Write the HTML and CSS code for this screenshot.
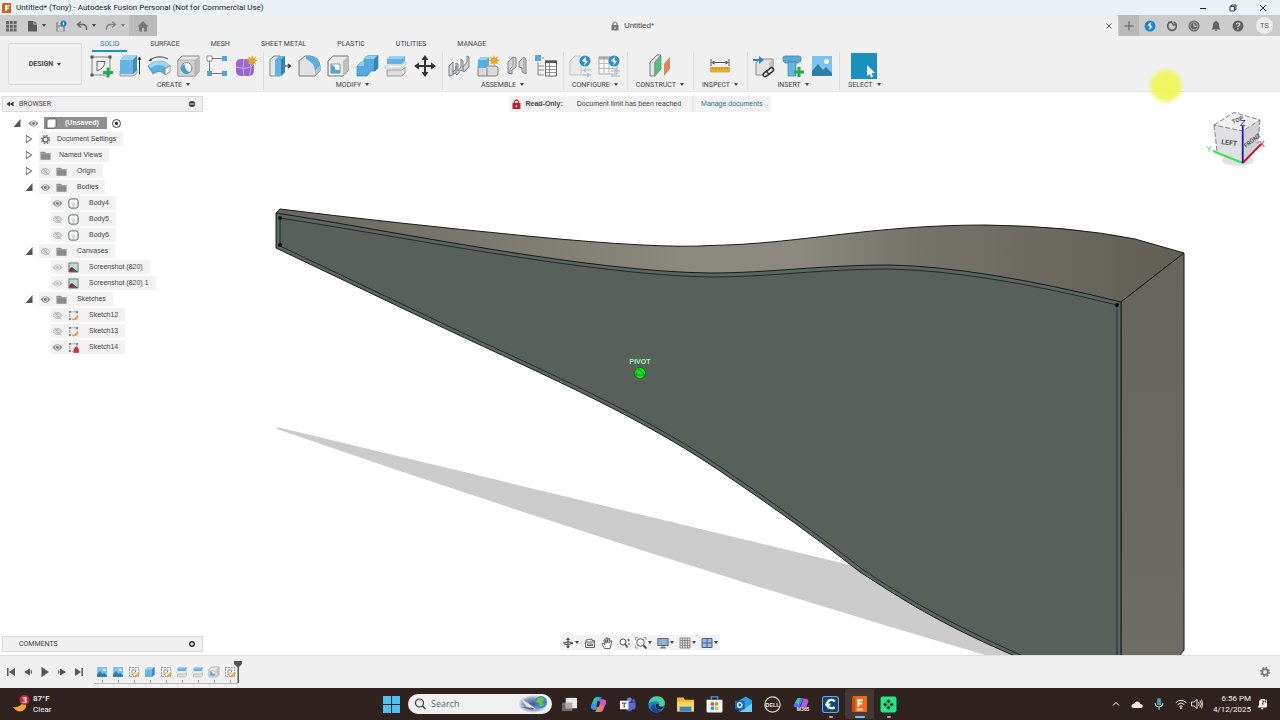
FILE: index.html
```html
<!DOCTYPE html>
<html lang="en">
<head>
<meta charset="utf-8">
<title>Untitled* (Tony) - Autodesk Fusion Personal (Not for Commercial Use)</title>
<link rel="stylesheet" href="styles.css">
</head>
<body>
<svg class="defs" aria-hidden="true">
  <symbol id="eye" viewBox="0 0 12 10"><path d="M.5 5Q6 -2 11.500 5Q6 12 .5 5Z" fill="#8f8f8f"/><circle cx="6" cy="5" r="2.600" fill="#eee"/><circle cx="6" cy="5" r="1.600" fill="#777"/></symbol>
  <symbol id="eye-off" viewBox="0 0 12 10"><path d="M1 5Q6 -1.500 11 5Q6 11.500 1 5Z" fill="none" stroke="#a2a2a2"/><circle cx="6" cy="5" r="1.800" fill="none" stroke="#a2a2a2" stroke-width=".8"/><path d="M2.500 1L9.500 9" stroke="#a2a2a2" stroke-width=".9"/></symbol>
  <symbol id="folder" viewBox="0 0 12 10"><path d="M.5 1H5.500L6.500 2.500H11.500V9.500H.5Z" fill="#8b8b8b"/><path d="M.5 3H11.500" stroke="#b5b5b5" stroke-width=".6"/></symbol>
  <symbol id="gear" viewBox="0 0 12 12"><circle cx="6" cy="6" r="4.300" fill="none" stroke="#777" stroke-width="1.600" stroke-dasharray="1.800 1.577"/><circle cx="6" cy="6" r="2.800" fill="none" stroke="#777" stroke-width="1.700"/></symbol>
  <symbol id="body" viewBox="0 0 12 12"><rect x="1" y="1" width="10" height="10" rx="2.500" fill="#fff" stroke="#4a525c"/><path d="M4 5H8V9.500H4Z" fill="#d3d6da"/></symbol>
  <symbol id="shot" viewBox="0 0 12 12"><path d="M1 1H11V11H1Z" fill="#b9dcd8" stroke="#555" stroke-width=".8"/><path d="M1.500 10.500V8Q4 4 6 7L10.500 10.500Z" fill="#8c2340"/><path d="M6 7L10.500 10.500H5Z" fill="#46606c"/></symbol>
  <symbol id="sketch" viewBox="0 0 12 12"><path d="M2 2H10V10H2Z" fill="none" stroke="#777" stroke-width=".8" stroke-dasharray="3 .8"/><path d="M1 1H3V3H1ZM9 1H11V3H9ZM1 9H3V11H1Z" fill="#5d87a8"/></symbol>
  <symbol id="pencil" viewBox="0 0 12 12"><path d="M6 11.500L6.500 9.500L10 6L11.500 7.500L8 11Z" fill="#f0a22c"/></symbol>
  <symbol id="padlock" viewBox="0 0 12 12"><path d="M6.500 7.500H11.500V11.800H6.500ZM7.500 7.500V6Q9 4.500 10.500 6V7.500" fill="#d6323a" stroke="#d6323a" stroke-width=".7"/></symbol>
  <symbol id="picture" viewBox="0 0 24 24"><path d="M2 2H22V22H2Z" fill="#78c4ee"/><circle cx="16.500" cy="7.500" r="2.500" fill="#fff6d8"/><path d="M2 17L8 10L13 16L16 13L22 19V22H2Z" fill="#2d7fab"/></symbol>
  <symbol id="tl-sketch" viewBox="0 0 12 12"><path d="M1.500 1.500H10.500V10.500H1.500Z" fill="#fafafa" stroke="#888" stroke-width=".8" stroke-dasharray="2 .7"/><path d="M4 9V4H8Q8 7 4 9Z" fill="none" stroke="#777" stroke-width=".8"/><path d="M6.500 11.500L7 9.500L10.500 6L12 7.500L8.500 11Z" fill="#eda93b"/></symbol>
  <symbol id="cube-blue" viewBox="0 0 24 24"><path d="M2 7L7 2H21V17L16 22H2Z" fill="#66b6e4"/><path d="M2 7L7 2H21L16 7Z" fill="#9bd4f2"/><path d="M16 7L21 2V17L16 22Z" fill="#3c88b8"/></symbol>
  <symbol id="split" viewBox="0 0 24 24"><path d="M3 5L6 2H21V7L18 10H3Z" fill="#62b3e2"/><path d="M3 5L6 2H21L18 5Z" fill="#98d2f0"/><path d="M1 13L4 11H18L22 8V10L18 14H1Z" fill="#f8fcfe" stroke="#8aa9b8" stroke-width=".6"/><path d="M3 16H18L21 13V19L18 22H3Z" fill="#dcdcdc" stroke="#8a8a8a" stroke-width=".8"/></symbol>
  <symbol id="shell" viewBox="0 0 24 24"><path d="M2 7L7 2H22V17L17 22H2Z" fill="#e9e9e9" stroke="#777"/><path d="M17 7V22L22 17V2Z" fill="#bfbfbf"/><path d="M5 10H14V19H5Z" fill="#fff" stroke="#777" stroke-width=".8"/><path d="M5 10L9 13V16L5 19ZM5 19L9 16H14V19Z" fill="#4ba6d8"/></symbol>
</svg>

<header class="titlebar">
  <svg class="i10" viewBox="0 0 10 10"><path d="M1 0H9V10H0V1Z" fill="#d9600f"/><path d="M3 2H7.500V3.500H5V4.500H7V6H5V8H3Z" fill="#fff"/></svg>
  <h1>Untitled* (Tony) - Autodesk Fusion Personal (Not for Commercial Use)</h1>
  <div class="window-buttons">
    <button aria-label="Minimize"><svg class="i10" viewBox="0 0 10 10"><path d="M2 5.500H8" stroke="#222"/></svg></button>
    <button aria-label="Restore"><svg class="i10" viewBox="0 0 10 10"><path d="M2 3.500H6.500V8H2ZM3.500 3.500V2H8V6.500H6.500" fill="none" stroke="#222" stroke-width=".9"/></svg></button>
    <button aria-label="Close"><svg class="i10" viewBox="0 0 10 10"><path d="M2 2L8 8M8 2L2 8" stroke="#222" stroke-width=".9"/></svg></button>
  </div>
</header>

<nav class="appbar">
  <div class="quick">
    <button aria-label="Data panel"><svg class="i12" viewBox="0 0 12 12"><path d="M1 1H4V4H1ZM4.800 1H7.800V4H4.800ZM8.600 1H11.600V4H8.600ZM1 4.800H4V7.800H1ZM4.800 4.800H7.800V7.800H4.800ZM8.600 4.800H11.600V7.800H8.600ZM1 8.600H4V11.600H1ZM4.800 8.600H7.800V11.600H4.800ZM8.600 8.600H11.600V11.600H8.600Z" fill="#666"/></svg></button>
    <button aria-label="File"><svg class="i12" viewBox="0 0 12 12"><path d="M2 1H7.500V4.500H11V11.500H2ZM8.300 1L11 3.700H8.300Z" fill="#5c5c5c"/></svg><i class="caret"></i></button>
    <button aria-label="Save"><svg class="i12" viewBox="0 0 12 12"><path d="M1 2H10V11.500H1Z" fill="#999"/><path d="M3 2H7V5H3ZM3 7H8V11H3Z" fill="#ccc"/><circle cx="8.500" cy="3.500" r="3" fill="#2088c4"/><path d="M8.500 2V5" stroke="#fff"/></svg></button>
    <button aria-label="Undo"><svg class="i12" viewBox="0 0 12 12"><path d="M5 1.500L1.500 4.500L5 7.500M1.500 4.500H7Q11 5 10.500 10" fill="none" stroke="#666" stroke-width="1.500"/></svg><i class="caret"></i></button>
    <button aria-label="Redo" class="faded"><svg class="i12" viewBox="0 0 12 12"><path d="M7 1.500L10.500 4.500L7 7.500M10.500 4.500H5Q1 5 1.500 10" fill="none" stroke="#555" stroke-width="1.300"/></svg><i class="caret"></i></button>
  </div>
  <button class="home" aria-label="Home"><svg class="i12" viewBox="0 0 12 12"><path d="M6 1L11.500 6.500H10V11.500H7V8H5V11.500H2V6.500H.5Z" fill="#777"/></svg></button>
  <div class="doc-tab">
    <span class="doc-name"><svg class="i10" viewBox="0 0 10 10"><path d="M1.500 4H8.500V9.500H1.500Z" fill="#777"/><path d="M3 4V2.500Q5 -.5 7 2.500V4" fill="none" stroke="#777" stroke-width="1.200"/><path d="M5 6V8" stroke="#eee"/></svg>Untitled*</span>
    <button aria-label="Close document"><svg class="i10" viewBox="0 0 10 10"><path d="M2.500 2.500L7.500 7.500M7.500 2.500L2.500 7.500" stroke="#666"/></svg></button>
  </div>
  <button class="new-doc" aria-label="New document"><svg class="i10" viewBox="0 0 10 10"><path d="M5 .5V9.500M.5 5H9.500" stroke="#777" stroke-width="1.500"/></svg></button>
  <div class="account">
    <button aria-label="Updates"><svg class="i12" viewBox="0 0 12 12"><circle cx="6" cy="6" r="5.500" fill="#1e88c4"/><path d="M7 2L3.500 5.500L6 6.500L5 10L8.500 6.500L6.500 5.500Z" fill="#fff"/></svg></button>
    <button aria-label="Extensions"><svg class="i12" viewBox="0 0 12 12"><circle cx="6" cy="6" r="4.300" fill="none" stroke="#606060" stroke-width="1.800"/><path d="M2 2.500H6L7.500 5L10.500 4" fill="none" stroke="#606060" stroke-width="1.500"/><path d="M5 0H8.500L7 3Z" fill="#cbcbcb"/></svg></button>
    <button aria-label="Job status"><svg class="i12" viewBox="0 0 12 12"><circle cx="6" cy="6" r="5.500" fill="#666"/><circle cx="6" cy="6" r="3.900" fill="#666" stroke="#bbb" stroke-width=".7"/><path d="M6 3.500V6.300H8.500" fill="none" stroke="#ddd"/></svg></button>
    <button aria-label="Notifications"><svg class="i12" viewBox="0 0 12 12"><path d="M1.500 9.500Q3 8 3 5Q3 2 5.300 1.700V.8H6.700V1.700Q9 2 9 5Q9 8 10.500 9.500ZM4.800 10.200H7.200Q6 12 4.800 10.200Z" fill="#606060"/></svg></button>
    <button aria-label="Help"><svg class="i12" viewBox="0 0 12 12"><circle cx="6" cy="6" r="5.500" fill="#606060"/><path d="M4.200 4.500Q4.300 3 6 3Q7.800 3.100 7.700 4.500Q7.500 5.600 6 6.200V7.200M6 8.200V9.400" fill="none" stroke="#ddd" stroke-width="1.200"/></svg></button>
    <button class="avatar">TS</button>
  </div>
</nav>

<section class="ribbon">
  <button class="workspace">DESIGN<i class="caret"></i></button>
  <div class="tools">
    <nav class="tabs">
      <button class="on">SOLID</button><button>SURFACE</button><button>MESH</button><button>SHEET METAL</button><button>PLASTIC</button><button>UTILITIES</button><button>MANAGE</button>
    </nav>
    <div class="groups">
      <div class="group">
        <div class="icons">
          <button aria-label="Create sketch"><svg viewBox="0 0 24 24"><path d="M3 3H21V21H3Z" fill="none" stroke="#777" stroke-width=".9"/><path d="M1.500 1.500H4.500V4.500H1.500ZM19.500 1.500H22.500V4.500H19.500ZM1.500 19.500H4.500V22.500H1.500Z" fill="#555"/><path d="M8 17V7.500H16Q16 14 8 17Z" fill="none" stroke="#666"/><path d="M19 13.500V23.500M14 18.500H24" stroke="#27ad50" stroke-width="3"/></svg></button>
          <button aria-label="Extrude"><svg viewBox="0 0 24 24"><path d="M2 17V22H15L19 19V14Z" fill="#d8d8d8" stroke="#888" stroke-width=".8"/><path d="M2 6L6 1.500H19V16L15 20H2Z" fill="#62b5e5"/><path d="M2 6L6 1.500H19L15 6Z" fill="#9bd5f3"/><path d="M15 6L19 1.500V16L15 20Z" fill="#3f8dbd"/><path d="M21.500 20V4M20 6L21.500 3L23 6" fill="none" stroke="#333"/></svg></button>
          <button aria-label="Revolve"><svg viewBox="0 0 24 24"><path d="M1 12Q12 2 23 12L18 20Q12 15 6 20Z" fill="#5caedf" stroke="#397fa8" stroke-width=".7"/><path d="M1 12Q12 2 23 12L20 14Q12 8 4 14Z" fill="#9ad4f2"/><path d="M23 11.500V18L18 21V15Z" fill="#fff" stroke="#777" stroke-width=".8"/><path d="M3 6Q12 0 21 5" fill="none" stroke="#444"/><path d="M1.500 7L4 4L5 7Z" fill="#444"/></svg></button>
          <button aria-label="Hole"><svg viewBox="0 0 24 24"><path d="M2 6L6 2H23V18L19 22H2Z" fill="#e6e6e6" stroke="#888"/><path d="M19 6L23 2V18L19 22Z" fill="#bababa"/><path d="M2 6H19V22H2Z" fill="#d2d2d2" stroke="#999" stroke-width=".6"/><circle cx="10.500" cy="14" r="5.500" fill="#f8f8f8" stroke="#777" stroke-width=".9"/><path d="M6.500 11A5 5 0 0 0 14 18Q9 17 8.500 10Z" fill="#469fce"/></svg></button>
          <button aria-label="Pattern"><svg viewBox="0 0 24 24"><path d="M7 4.500H17M4.500 7V17M7 19.500H17" fill="none" stroke="#777"/><path d="M2 2H7V7H2Z" fill="#fff" stroke="#777" stroke-width=".8"/><path d="M17 2H22V7H17ZM2 17H7V22H2ZM17 17H22V22H17Z" fill="#4ba6d6"/></svg></button>
          <button aria-label="Create form"><svg viewBox="0 0 24 24"><path d="M2 10Q2 5 7 5H14Q20 5 20 11V17Q20 22 14 22H7Q2 22 2 17Z" fill="#9868cf"/><path d="M2 13Q10 16 17 13L20 10M10 5Q8 14 10 22M16 6Q18 14 15.500 22" fill="none" stroke="#c8a9ec"/><path d="M18 1L19.200 4L22 2.500L21 5.500L24 6.500L21 7.500L22 10.500L19.200 9L18 12L17 9L14 10.500L15 7.500L12 6.500L15 5.500L14 2.500L17 4Z" fill="#e9a62b"/></svg></button>
        </div>
        <button class="label">CREATE<i class="caret"></i></button>
      </div>
      <div class="group">
        <div class="icons">
          <button aria-label="Press pull"><svg viewBox="0 0 24 24"><path d="M2 6L6 2H12V22H2Z" fill="#e7e7e7" stroke="#888"/><path d="M7 6L11 2H17V18L13 22H7Z" fill="#5fb2e1"/><path d="M13 6L17 2V18L13 22Z" fill="#337fae"/><path d="M17 12H22M20 10L22.500 12L20 14" fill="none" stroke="#333" stroke-width="1.200"/></svg></button>
          <button aria-label="Fillet"><svg viewBox="0 0 24 24"><path d="M2 7L8 2H13Q22 3 23 12V17L18 22H2Z" fill="#e2e2e2" stroke="#777"/><path d="M9 2H13Q22 3 23 12L18 17Q17 8 9 5Z" fill="#59aedd"/><path d="M18 17L23 12V17L18 22Z" fill="#bdbdbd"/></svg></button>
          <button aria-label="Shell"><svg viewBox="0 0 24 24"><use href="#shell"/></svg></button>
          <button aria-label="Combine"><svg viewBox="0 0 24 24"><path d="M9 5L13 1.500H23V14L20 17H16L12 22H2V12L6 8H9Z" fill="#55abdc" stroke="#3b86b2" stroke-width=".7"/><path d="M9 5L13 1.500H23L19 5ZM2 12L6 8H9V12Z" fill="#91cff0"/><path d="M19 5L23 1.500V14L19 17Z" fill="#3883b0"/></svg></button>
          <button aria-label="Split"><svg viewBox="0 0 24 24"><use href="#split"/></svg></button>
          <button aria-label="Move"><svg viewBox="0 0 24 24"><path d="M12 4V20M4 12H20" stroke="#333" stroke-width="2"/><path d="M12 1L8.500 6H15.500ZM12 23L8.500 18H15.500ZM1 12L6 8.500V15.500ZM23 12L18 8.500V15.500Z" fill="#333"/></svg></button>
        </div>
        <button class="label">MODIFY<i class="caret"></i></button>
      </div>
      <div class="group">
        <div class="icons">
          <button aria-label="Joint"><svg viewBox="0 0 24 24"><path d="M2 12L6 8V18L9 15V9L11 10V17L14 13V5L16 7V13L20 8V2L22 3V13L17 18L14 16L10 21L8 19L4 22H2Z" fill="#d0d3d5" stroke="#777" stroke-width=".9"/><path d="M6 17V21M9 12V19M16 12V17" stroke="#777"/></svg></button>
          <button aria-label="New component"><svg viewBox="0 0 24 24"><path d="M2 12H20L22 14V20L20 22H2Z" fill="#d9d9d9" stroke="#777" stroke-width=".9"/><path d="M2 6L5 3H13V11L10 14H2Z" fill="#58addd"/><path d="M2 6L5 3H13L10 6Z" fill="#98d2f0"/><path d="M11 14V22" fill="none" stroke="#777" stroke-width=".9"/><path d="M18 1L19.200 4L22 2.500L21 5.500L24 6.500L21 7.500L22 10.500L19.200 9L18 12L17 9L14 10.500L15 7.500L12 6.500L15 5.500L14 2.500L17 4Z" fill="#e9a62b"/></svg></button>
          <button aria-label="As-built joint"><svg viewBox="0 0 24 24"><path d="M3 8L8 3L11 4V13L7 16V20L3 19ZM14 8L19 3L21 5V20L17 18V14L14 13Z" fill="#d0d3d5" stroke="#777" stroke-width=".9"/><path d="M8 3V12L5 15V20M19 3V19" fill="none" stroke="#888" stroke-width=".8"/></svg></button>
          <button aria-label="Bill of materials"><svg viewBox="0 0 24 24"><path d="M1 1H7V7H1Z" fill="#55aadb"/><path d="M8 4H10M4 8V21H10M4 12H10M4 16H10" fill="none" stroke="#888"/><path d="M11.500 7H22.500V22H11.500Z" fill="#fff" stroke="#666"/><path d="M11 6.500H23V9H11Z" fill="#555"/><path d="M11 12.500H23M11 15.500H23M11 18.500H23M15.500 9V22" stroke="#777" stroke-width=".8"/></svg></button>
        </div>
        <button class="label">ASSEMBLE<i class="caret"></i></button>
      </div>
      <div class="group">
        <div class="icons">
          <button aria-label="Configure"><svg viewBox="0 0 24 24"><path d="M2 7L7 2H13V21H2Z" fill="#e9e9e9" stroke="#c4c4c4"/><path d="M14 16H23M14 21H23M17 14V18M20 19V23" stroke="#9fb4bf"/><circle cx="17" cy="7" r="5.500" fill="#2a8fca"/><path d="M18 2.500L14 7L17 8L16 12L20 7L17.500 6.500Z" fill="#fff"/></svg></button>
          <button aria-label="Configuration table"><svg viewBox="0 0 24 24"><path d="M2 3H20V20H2Z" fill="#f7f7f7" stroke="#aaa"/><path d="M2 4H14" stroke="#aaa" stroke-width="3"/><path d="M2 9.500H20M2 14.500H20M7 5V20M12 5V20" stroke="#bbb"/><path d="M14 17H23M14 22H23M18 15V19" stroke="#9fb4bf"/><circle cx="17" cy="7" r="5.500" fill="#2a8fca"/><path d="M18 2.500L14 7L17 8L16 12L20 7L17.500 6.500Z" fill="#fff"/></svg></button>
        </div>
        <button class="label">CONFIGURE<i class="caret"></i></button>
      </div>
      <div class="group">
        <div class="icons">
          <button aria-label="Construct plane"><svg viewBox="0 0 24 24"><path d="M2 8L9 1H13L7 8V22H2Z" fill="#e4e4e4" stroke="#777"/><path d="M7 9L13 2V15L7 22Z" fill="#47c57a" stroke="#6c8b76" stroke-width=".7"/><path d="M16 10L22 3V15L16 22Z" fill="#da8756"/></svg></button>
        </div>
        <button class="label">CONSTRUCT<i class="caret"></i></button>
      </div>
      <div class="group">
        <div class="icons">
          <button aria-label="Measure"><svg viewBox="0 0 24 24"><path d="M3 5V12M21 5V12M4 8.500H20" stroke="#555"/><path d="M3 8.500L6.500 6.500V10.500ZM21 8.500L17.500 6.500V10.500Z" fill="#555"/><path d="M2.500 13.500H21.500V18H2.500Z" fill="#eeb42f" stroke="#d29a22" stroke-width=".7"/><path d="M5 13.500V15.500M8 13.500V16M11 13.500V15.500M14 13.500V16M17 13.500V15.500M19.500 13.500V15.500" stroke="#976a12" stroke-width=".6"/></svg></button>
        </div>
        <button class="label">INSPECT<i class="caret"></i></button>
      </div>
      <div class="group">
        <div class="icons">
          <button aria-label="Insert derive"><svg viewBox="0 0 24 24"><path d="M4 9L8 5H21V17L17 21H4Z" fill="#e3e3e3" stroke="#888"/><path d="M17 9L21 5V17L17 21Z" fill="#c2c2c2"/><path d="M1 5H7V2L12 6L7 10V7H1Z" fill="#2787bd"/><g fill="#eee" stroke="#333" stroke-width="1.500"><rect x="11" y="18" width="7" height="4" rx="2" transform="rotate(-38 14 20)"/><rect x="15" y="15" width="7" height="4" rx="2" transform="rotate(-38 18 17)"/></g></svg></button>
          <button aria-label="Insert fastener"><svg viewBox="0 0 24 24"><path d="M2 3L4 2H18L20 3V7L17 9H4L2 7Z" fill="#58a9d5" stroke="#3c7fa7" stroke-width=".7"/><path d="M7 8H15V22H7Z" fill="#67b5de" stroke="#3c7fa7" stroke-width=".7"/><path d="M18 13V23M13 18H23" stroke="#27ad50" stroke-width="3"/></svg></button>
          <button aria-label="Insert canvas"><svg viewBox="0 0 24 24"><use href="#picture"/></svg></button>
        </div>
        <button class="label">INSERT<i class="caret"></i></button>
      </div>
      <div class="group">
        <div class="icons">
          <button aria-label="Select" class="picked"><svg viewBox="0 0 24 24"><path d="M3 4H21V17H3Z" fill="none" stroke="#4c8a74" stroke-dasharray="2 2"/><path d="M15 11V22L17.500 20L19 23.500L21 22.500L19.500 19H23Z" fill="#fff"/></svg></button>
        </div>
        <button class="label">SELECT<i class="caret"></i></button>
      </div>
    </div>
  </div>
</section>

<main class="viewport">
  <svg class="scene" viewBox="0 92 1280 563" preserveAspectRatio="xMidYMid slice">
    <defs>
      <linearGradient id="top" gradientUnits="userSpaceOnUse" x1="276" y1="0" x2="1184" y2="0"><stop offset="0" stop-color="#68665e"/><stop offset=".25" stop-color="#7d7a70"/><stop offset=".45" stop-color="#8b887e"/><stop offset=".58" stop-color="#8c8a80"/><stop offset=".7" stop-color="#75736a"/><stop offset="1" stop-color="#605e55"/></linearGradient>
      <linearGradient id="side" x1="0" y1="0" x2="0" y2="1"><stop offset="0" stop-color="#66645c"/><stop offset="1" stop-color="#6e6c64"/></linearGradient>
    </defs>
    <path d="M277 427L850 565L1015 655H985Q620 548 277 429Z" fill="#cbcbcb"/>
    <path d="M276 213L280 209Q393 223 527 236T710 245.500C800 244 870 225 985 225Q1070 226 1135 239L1184 253L1121 302V330H700Z" fill="url(#top)" stroke="#171a18"/>
    <path d="M1121 302L1184 253V650L1179 656H1121Z" fill="url(#side)" stroke="#171a18"/>
    <path d="M276 213C393 231 590 272 710 273C770 273 820 265 890 265Q980 267 1121 302V656H1015C940 624 900 598 860 572Q800 525 720 471C630 410 527 368 427 320L276 248Z" fill="#5b6662" stroke="#171a18"/>
    <path d="M280 218C393 235 590 275 710 277C770 277 820 269 890 269Q980 271 1117 305V656H1023C950 624 900 595 862 569Q802 522 722 468C632 407 529 365 429 317L280 246Z" fill="#576059" stroke="#222b28"/>
    <circle cx="280" cy="218" r="2" fill="#111"/><circle cx="280" cy="245" r="2" fill="#111"/><circle cx="1117" cy="305" r="2" fill="#111"/>
  </svg>

  <div class="pivot"><span>PIVOT</span><svg class="i12" viewBox="0 0 12 12"><circle cx="6" cy="6" r="5.500" fill="#13e81f" stroke="#0b5e14" stroke-width=".8"/><path d="M5 2L1.500 8M5 2L10.500 8M1.500 8H10.500" fill="none" stroke="#087d12" stroke-width=".8"/></svg></div>

  <div class="notice">
    <span class="notice-text"><svg class="i10" viewBox="0 0 10 10"><path d="M1 4H9V10H1Z" fill="#c1202f"/><path d="M3 4V2.500Q5 -.5 7 2.500V4" fill="none" stroke="#c1202f" stroke-width="1.300"/><path d="M5 6V8" stroke="#fff"/></svg><b>Read-Only:</b>Document limit has been reached</span>
    <a href="#">Manage documents</a>
  </div>

  <aside class="browser">
    <div class="panel-head"><button aria-label="Collapse"><svg class="i8" viewBox="0 0 8 8"><path d="M4 1.500V6.500L.5 4ZM7.500 1.500V6.500L4 4Z" fill="#333"/></svg></button><h2>BROWSER</h2><button aria-label="Hide panel"><svg class="i8" viewBox="0 0 8 8"><circle cx="4" cy="4" r="3" fill="#333"/><path d="M2 4H6" stroke="#fff"/></svg></button></div>
    <ul class="tree">
      <li class="root"><button class="twist open" aria-label="Collapse document"></button><svg class="ic"><use href="#eye"/></svg><span class="root-name"><svg class="ic" viewBox="0 0 12 12"><path d="M1 3L3 1H11V9L9 11H1Z" fill="#fff" stroke="#555"/></svg><b>(Unsaved)</b></span><input type="radio" checked aria-label="Activate (Unsaved)"></li>
      <li><button class="twist" aria-label="Expand"></button><span class="node"><svg class="ic"><use href="#gear"/></svg>Document Settings</span></li>
      <li><button class="twist" aria-label="Expand"></button><span class="node"><svg class="ic"><use href="#folder"/></svg>&nbsp;Named Views</span></li>
      <li><button class="twist" aria-label="Expand"></button><span class="node two"><svg class="ic"><use href="#eye-off"/></svg><svg class="ic"><use href="#folder"/></svg>Origin</span></li>
      <li><button class="twist open" aria-label="Collapse"></button><span class="node two"><svg class="ic"><use href="#eye"/></svg><svg class="ic"><use href="#folder"/></svg>Bodies</span></li>
      <li class="leaf"><span class="node two"><svg class="ic"><use href="#eye"/></svg><svg class="ic"><use href="#body"/></svg>Body4</span></li>
      <li class="leaf"><span class="node two"><svg class="ic"><use href="#eye-off"/></svg><svg class="ic"><use href="#body"/></svg>Body5</span></li>
      <li class="leaf"><span class="node two"><svg class="ic"><use href="#eye-off"/></svg><svg class="ic"><use href="#body"/></svg>Body6</span></li>
      <li><button class="twist open" aria-label="Collapse"></button><span class="node two"><svg class="ic"><use href="#eye-off"/></svg><svg class="ic"><use href="#folder"/></svg>Canvases</span></li>
      <li class="leaf"><span class="node two"><svg class="ic dim"><use href="#eye"/></svg><svg class="ic"><use href="#shot"/></svg>Screenshot (820)</span></li>
      <li class="leaf"><span class="node two"><svg class="ic dim"><use href="#eye"/></svg><svg class="ic"><use href="#shot"/></svg>Screenshot (820) 1</span></li>
      <li><button class="twist open" aria-label="Collapse"></button><span class="node two"><svg class="ic"><use href="#eye"/></svg><svg class="ic"><use href="#folder"/></svg>Sketches</span></li>
      <li class="leaf"><span class="node two"><svg class="ic"><use href="#eye-off"/></svg><svg class="ic"><use href="#sketch"/><use href="#pencil"/></svg>Sketch12</span></li>
      <li class="leaf"><span class="node two"><svg class="ic"><use href="#eye-off"/></svg><svg class="ic"><use href="#sketch"/><use href="#pencil"/></svg>Sketch13</span></li>
      <li class="leaf"><span class="node two"><svg class="ic"><use href="#eye"/></svg><svg class="ic"><use href="#sketch"/><use href="#padlock"/></svg>Sketch14</span></li>
    </ul>
  </aside>

  <svg class="viewcube" viewBox="1204 106 66 66">
    <ellipse cx="1238" cy="160" rx="16" ry="6" fill="#000" opacity=".12"/>
    <path d="M1214 125L1242.500 131L1242.700 163L1217 151Z" fill="#dfe0e2"/>
    <path d="M1242.500 131L1260 120L1258 144L1242.700 163Z" fill="#cfd1d4"/>
    <path d="M1214 125L1234 112.500L1260 120L1242.500 131Z" fill="#eff0f1"/>
    <path d="M1214 125L1234 112.500L1260 120L1242.500 131ZM1214 125L1217 151M1260 120L1258 144" fill="none" stroke="#666" stroke-width=".8" stroke-dasharray="5 2"/>
    <text x="1221" y="144" class="cube-face" transform="rotate(8 1221 144)">LEFT</text>
    <text x="1246" y="148" class="cube-face side" transform="rotate(-38 1246 148)">FRONT</text>
    <text x="1233" y="124" class="cube-face side" transform="rotate(-22 1233 124)">TOP</text>
    <path d="M1242.700 163L1213 151" stroke="#35e052" stroke-width="2"/>
    <path d="M1242.700 163L1261 144" stroke="#c4182c" stroke-width="2"/>
    <path d="M1242.700 163V126" stroke="#2617a8" stroke-width="1.800"/>
    <text x="1206" y="152" class="axis y">Y</text><text x="1259" y="147" class="axis x">X</text><text x="1240" y="126" class="axis z">Z</text>
  </svg>

  <div class="comments panel-head"><h2>COMMENTS</h2><button aria-label="Add comment"><svg class="i8" viewBox="0 0 8 8"><circle cx="4" cy="4" r="3" fill="#222"/><path d="M2 4H6M4 2V6" stroke="#fff"/></svg></button></div>

  <div class="navbar">
    <button aria-label="Orbit"><svg class="i12" viewBox="0 0 12 12"><path d="M6 1V11M1 6Q6 3.500 11 6Q6 9 2 7" fill="none" stroke="#444"/><path d="M4 3L6 .5L8 3ZM4 9L6 11.500L8 9Z" fill="#444"/></svg><i class="caret"></i></button>
    <button aria-label="Look at"><svg class="i12" viewBox="0 0 12 12"><path d="M1.500 5H10.500V10.500H1.500ZM2 5V3L8 2V3.500H10.500V5M3.500 7H8.500V8.500H3.500Z" fill="none" stroke="#666"/></svg></button>
    <button aria-label="Pan"><svg class="i12" viewBox="0 0 12 12"><path d="M3.500 11.500L1 7L2 6L4 8L2.800 3L4 2.500L5 6V1L6.300 .7V5.500L7.500 1.300L8.700 1.700L8 6L9.800 3.500L10.800 4L9 11.500Z" fill="#fff" stroke="#444" stroke-width=".8"/></svg></button>
    <button aria-label="Zoom"><svg class="i12" viewBox="0 0 12 12"><circle cx="5" cy="5" r="3" fill="#fff" stroke="#555"/><path d="M7 7L9.500 10.500" stroke="#555" stroke-width="1.700"/><path d="M9 3H12M10.500 1.500V4.500M9.500 7H12" stroke="#555" stroke-width=".8"/></svg></button>
    <button aria-label="Fit"><svg class="i12" viewBox="0 0 12 12"><circle cx="5.500" cy="5.500" r="3.800" fill="#fff" stroke="#555"/><path d="M8.500 8.500L11.500 11.500" stroke="#444" stroke-width="1.800"/><path d="M.5 3V.5H3M8.500 .5H11V3M.5 8.500V11H3" fill="none" stroke="#777" stroke-width=".7"/></svg><i class="caret"></i></button>
    <button aria-label="Display settings"><svg class="i12" viewBox="0 0 12 12"><path d="M.8 1.500H11.200V8.500H.8Z" fill="#8fb0d8" stroke="#666"/><path d="M4 9.500H8L9 11.500H3Z" fill="#777"/></svg><i class="caret"></i></button>
    <button aria-label="Grid"><svg class="i12" viewBox="0 0 12 12"><path d="M1 1H11V11H1ZM1 3.500H11M1 6H11M1 8.500H11M3.500 1V11M6 1V11M8.500 1V11" fill="#e4e4e4" stroke="#777" stroke-width=".8"/></svg><i class="caret"></i></button>
    <button aria-label="Viewports"><svg class="i12" viewBox="0 0 12 12"><path d="M1 1.500H11V10.500H1ZM1 6H11M6 1.500V10.500" fill="#9bbce4" stroke="#4a5f82"/></svg><i class="caret"></i></button>
  </div>
</main>

<footer class="timeline">
  <div class="playback">
    <button aria-label="To start"><svg class="i10" viewBox="0 0 10 10"><path d="M1 1H2.500V9H1ZM9 1V9L3 5Z" fill="#555"/></svg></button>
    <button aria-label="Step back"><svg class="i10" viewBox="0 0 10 10"><path d="M7 1.500V8.500L1 5ZM7.800 3.500H9V6.500H7.800Z" fill="#555"/></svg></button>
    <button aria-label="Play"><svg class="i10" viewBox="0 0 10 10"><path d="M1.500 0V10L9 5Z" fill="#555"/></svg></button>
    <button aria-label="Step forward"><svg class="i10" viewBox="0 0 10 10"><path d="M3 1.500V8.500L9 5ZM1 3.500H2.200V6.500H1Z" fill="#555"/></svg></button>
    <button aria-label="To end"><svg class="i10" viewBox="0 0 10 10"><path d="M7.500 1H9V9H7.500ZM1 1V9L7 5Z" fill="#555"/></svg></button>
  </div>
  <ol class="history">
    <li><svg><use href="#picture"/></svg></li><li><svg><use href="#picture"/></svg></li><li><svg><use href="#tl-sketch"/></svg></li><li><svg><use href="#cube-blue"/></svg></li><li><svg><use href="#tl-sketch"/></svg></li><li><svg><use href="#split"/></svg></li><li><svg><use href="#split"/></svg></li><li><svg><use href="#shell"/></svg></li><li><svg><use href="#tl-sketch"/></svg></li>
  </ol>
  <svg class="marker" viewBox="0 0 8 22"><path d="M0 0H8V3L5 6V22H3.500V6L0 3Z" fill="#555"/></svg>
  <button class="prefs" aria-label="Timeline settings"><svg class="i12"><use href="#gear"/></svg></button>
</footer>

<footer class="taskbar">
  <button class="weather"><svg viewBox="0 0 18 18"><path d="M1 12Q9 13 11 6Q16 9 13 14Q7 20 1 12Z" fill="#f2a33a"/><circle cx="12.500" cy="5" r="5" fill="#c9283b"/><text x="10.500" y="8" class="badge-num">3</text></svg><span><b>87°F</b><br>Clear</span></button>
  <div class="apps">
    <button aria-label="Start"><svg viewBox="0 0 16 16"><path d="M0 0H7.500V7.500H0ZM8.500 0H16V7.500H8.500ZM0 8.500H7.500V16H0ZM8.500 8.500H16V16H8.500Z" fill="#4cc3f5"/></svg></button>
    <label class="search"><svg class="i12" viewBox="0 0 12 12"><circle cx="5.500" cy="5" r="4" fill="none" stroke="#333" stroke-width="1.200"/><path d="M8.500 8L11.500 11" stroke="#333" stroke-width="1.300"/></svg><input type="text" placeholder="Search" aria-label="Search"><svg class="space" viewBox="0 0 30 18"><defs><radialGradient id="neb"><stop offset="0" stop-color="#3d5b9a"/><stop offset=".6" stop-color="#7f94bf"/><stop offset="1" stop-color="#f0f0f0"/></radialGradient></defs><ellipse cx="15" cy="9" rx="15" ry="9" fill="url(#neb)"/><path d="M3 4L10 8L18 14L14 15L8 11Z" fill="#dfe4ee"/><path d="M2 12L16 13L15 15Z" fill="#56627c"/><circle cx="23" cy="7" r="6" fill="#3c7fd6"/><path d="M19 4Q23 0 27 4L24 7L26 10L22 12L21 8L18 7Z" fill="#6bc23e"/></svg></label>
    <button aria-label="Task view"><svg viewBox="0 0 18 16"><path d="M1 6H12V15H1Z" fill="#6f6b69"/><path d="M5 1H17V12H5Z" fill="#e9e9e9"/><path d="M5 6H12V12H5Z" fill="#aaa"/></svg></button>
    <button aria-label="Copilot"><svg viewBox="0 0 16 16"><path d="M4 2Q5 1 7 1H11L6 13H3Q0 12 1 9Z" fill="#3196e6"/><path d="M1.500 8L4 2L8 1L6 7Z" fill="#35bfb0"/><path d="M12 3H13Q16 4 15 7L12 14Q11 15 9 15H5L10 3Z" fill="#cf56c8"/><path d="M8 9L5 15H9Q11 15 12 12L13 9Z" fill="#f0814e"/><path d="M7 5H9.500L8.500 10H6Z" fill="#30231f"/></svg></button>
    <button aria-label="Teams"><svg viewBox="0 0 18 16"><circle cx="11" cy="3" r="2.500" fill="#7b83eb"/><circle cx="15.500" cy="4" r="1.700" fill="#5059c9"/><path d="M7 6H17.500V11Q17 14 14 13Q13 16 10 15Q7 14 7 11Z" fill="#6068cf"/><path d="M1 4H10V13H1Z" fill="#fff"/><path d="M3 6.500H8M5.500 6.500V11.500" stroke="#464eb8" stroke-width="1.300"/></svg></button>
    <button aria-label="Edge"><svg viewBox="0 0 16 16"><circle cx="8" cy="8" r="7.800" fill="#1c7fd0"/><path d="M.5 7Q2 0 9 .2Q16 1 15.800 7Q15 10.500 10.500 10Q11.500 5 7 5Q3 5 .5 7Z" fill="#48cf9b"/><path d="M6 7Q5 13 13 13Q9 17 4 14Q1 10 6 7Z" fill="#124a99"/><path d="M10 7.500Q9 10.500 15 10Q14 12 12 12.500Q6 12.500 7.500 7.500Z" fill="#30231f"/></svg></button>
    <button aria-label="File Explorer"><svg viewBox="0 0 16 16"><path d="M0 1.500H6L7.500 3.500H16V14.500H0Z" fill="#f2b932"/><path d="M0 5.500H16V14.500H0Z" fill="#fbd65e"/><path d="M2.500 10H13.500V14.500H2.500Z" fill="#2f86d4"/></svg></button>
    <button aria-label="Microsoft Store"><svg viewBox="0 0 16 16"><path d="M5 3V.8H11V3" fill="none" stroke="#48a6df" stroke-width="1.300"/><path d="M.5 3.500H15.500V14Q15.500 15.500 14 15.500H2Q.5 15.500 .5 14Z" fill="#f4f4f4"/><path d="M4.500 6H7.500V9H4.500Z" fill="#e5492e"/><path d="M8.500 6H11.500V9H8.500Z" fill="#76b82a"/><path d="M4.500 10H7.500V13H4.500Z" fill="#249de0"/><path d="M8.500 10H11.500V13H8.500Z" fill="#f5b81b"/></svg></button>
    <button aria-label="Outlook"><svg viewBox="0 0 16 16"><path d="M4 4L10 .5L16 4V15H4Z" fill="#2d9ce0"/><path d="M4 15L16 7V15Z" fill="#6bd0f7"/><path d="M4 7L10 11L4 15Z" fill="#1a6cbd"/><path d="M0 4.500H9V12.500H0Z" fill="#1566b7"/><ellipse cx="4.500" cy="8.500" rx="2" ry="2.300" fill="none" stroke="#fff" stroke-width="1.200"/></svg></button>
    <button aria-label="Dell"><svg viewBox="0 0 16 16"><circle cx="8" cy="8" r="7.200" fill="none" stroke="#ddd" stroke-width="1.100"/><text x="8" y="10" text-anchor="middle" class="dell">DELL</text></svg></button>
    <button aria-label="Microsoft 365"><svg viewBox="0 0 18 16"><path d="M5 1H11L7 11H2Q0 10 1 8Z" fill="#4e74ee"/><path d="M2 6L5 1H8L6 8Z" fill="#39c3ae"/><path d="M12 2H14Q17 3 16 6L14 11H8L11 2Z" fill="#b95bd8"/><text x="4" y="15" class="m365">M365</text></svg></button>
    <button aria-label="Camtasia" class="running"><svg viewBox="0 0 16 16"><rect x=".5" y=".5" width="15" height="15" rx="2" fill="#0e4778" stroke="#6ba8cd"/><path d="M12 5Q10 3 7 4Q4 6 5 9Q7 12.500 12 11" fill="none" stroke="#fff" stroke-width="2.200"/><path d="M3 8H8" stroke="#fff" stroke-width="2"/></svg></button>
    <button aria-label="Fusion" class="running active"><svg viewBox="0 0 16 16"><path d="M2 0H15V15H1V2Z" fill="#f26a1b"/><path d="M1 2L4 0V15H1Z" fill="#c94c0c"/><path d="M6 3H11V5H8V6H10.500V8H8V10H6Z" fill="#fff"/><text x="5.500" y="14" class="fus">FUS</text></svg></button>
    <button aria-label="Recorder" class="running"><svg viewBox="0 0 16 16"><rect x=".5" y=".5" width="15" height="15" rx="2" fill="#27e687"/><path d="M8 3L10 5L8 7L6 5ZM8 9L10 11L8 13L6 11ZM5 6L7 8L5 10L3 8ZM11 6L13 8L11 10L9 8Z" fill="#113d2a"/></svg></button>
  </div>
  <div class="tray">
    <button aria-label="Hidden icons"><svg class="i10" viewBox="0 0 10 10"><path d="M2 6.500L5 3.500L8 6.500" fill="none" stroke="#fff"/></svg></button>
    <button aria-label="OneDrive"><svg class="i12" viewBox="0 0 12 12"><path d="M3 10Q0 10 .5 7.500Q1 5.500 3 6Q4 3 6.500 3.500Q9 3.500 9.300 6Q12 6 11.700 8.500Q11.500 10 10 10Z" fill="#eee"/></svg></button>
    <button aria-label="Microphone"><svg class="i12" viewBox="0 0 12 12"><rect x="4" y="0" width="4" height="7.500" rx="2" fill="#4b96ac"/><path d="M2 5Q2 9 6 9Q10 9 10 5M6 9V12" fill="none" stroke="#b7d5dc"/></svg></button>
    <div class="status">
      <button aria-label="Wi-Fi"><svg class="i12" viewBox="0 0 12 12"><path d="M.8 4.500Q6 0 11.200 4.500M2.700 6.500Q6 3.500 9.300 6.500M4.400 8.500Q6 7 7.600 8.500" fill="none" stroke="#eee"/><circle cx="6" cy="10" r="1" fill="#eee"/></svg></button>
      <button aria-label="Volume"><svg class="i12" viewBox="0 0 12 12"><path d="M.5 4H3L6 1.500V10.500L3 8H.5ZM7.500 4Q9 6 7.500 8M9 2.500Q11.500 6 9 9.500M10.500 1.500Q13 6 10.500 10.500" fill="none" stroke="#eee" stroke-width=".9"/></svg></button>
    </div>
    <div class="clock">
      <time>6:56 PM<br>4/12/2025</time>
      <button aria-label="Notifications"><svg class="i12" viewBox="0 0 12 12"><path d="M1.500 9.500L3 7V4Q3.500 1 6 1H11V8L10.500 9.500ZM4.500 10.300H8Q6 12.500 4.500 10.300Z" fill="#eee"/><path d="M6 3H8L6 6H8M9 1.500H10.500L9 4H10.500" fill="none" stroke="#30231f" stroke-width=".8"/></svg></button>
    </div>
  </div>
</footer>

<div class="pointer-halo" aria-hidden="true"></div>
</body>
</html>
```
FILE: styles.css
```css
* { box-sizing: border-box; }

body {
  margin: 0;
  height: 100vh;
  display: flex;
  flex-direction: column;
  overflow: hidden;
  background: #fff;
  color: #444;
  font: 7px/10px "Liberation Sans", Arial, sans-serif;
}

button {
  display: inline-flex;
  align-items: center;
  justify-content: center;
  margin: 0;
  padding: 0;
  border: 0;
  background: none;
  color: inherit;
  font: inherit;
}

h1, h2, ul, ol { margin: 0; padding: 0; font: inherit; list-style: none; }
svg { display: block; flex: none; }
.defs { position: absolute; width: 0; height: 0; }
.i8 { width: 8px; height: 8px; }
.i10 { width: 10px; height: 10px; }
.i12 { width: 12px; height: 12px; }

.caret {
  margin-left: 4px;
  border: 2px solid transparent;
  border-top: 3px solid #444;
  border-bottom: 0;
}

/* Title bar */
.titlebar {
  display: flex;
  align-items: center;
  gap: 4px;
  height: 15px;
  padding: 0 12px 0 2px;
  background: #eaf2f6;
  color: #222;
  font: 8px/15px Roboto, sans-serif;
}
.titlebar h1 { flex: 1; }
.window-buttons { display: flex; gap: 20px; }

/* Document tabs */
.appbar {
  display: flex;
  align-items: stretch;
  height: 21px;
  background: #cbcbcb;
}
.quick { display: flex; align-items: center; gap: 9px; padding: 0 4px 0 5px; }
.faded { opacity: .6; }
.home { width: 28px; background: #bababa; }
.doc-tab {
  flex: 1;
  display: flex;
  align-items: center;
  padding-right: 4px;
  background: #f0f0f0;
  border-radius: 0 3px 0 0;
}
.doc-name {
  flex: 1;
  display: flex;
  align-items: center;
  justify-content: center;
  gap: 4px;
  padding-left: 3px;
  font-size: 8px;
}
.new-doc { width: 20px; margin-left: 1px; background: #b9b9b9; }
.account { display: flex; align-items: center; gap: 10px; padding: 0 7px 0 5px; }
.avatar {
  width: 17px;
  height: 17px;
  margin-left: 2px;
  border-radius: 50%;
  background: #ececec;
  color: #555;
}

/* Ribbon */
.ribbon {
  display: flex;
  height: 56px;
  padding-left: 8px;
  background: #f0f0f0;
  border-bottom: 1px solid #e2e2e2;
  font: 7px/12px Roboto, sans-serif;
}
.workspace {
  width: 74px;
  height: 42px;
  margin-top: 7px;
  border: 1px solid #dcdcdc;
  border-radius: 2px;
  font-weight: bold;
}
.tools { flex: 1; padding-left: 2px; }
.tabs { display: flex; gap: 15px; height: 16px; padding-left: 8px; }
.tabs button { padding: 0 8px; border-top: 2px solid transparent; border-bottom: 2px solid transparent; }
.tabs .on { color: #1480b5; border-bottom-color: #1f8fc5; }
.groups { display: flex; height: 38px; }
.group {
  display: flex;
  flex-direction: column;
  align-items: center;
  padding: 0 5px 0 4px;
  border-right: 1px solid #dcdcdc;
}
.group:first-child { padding-left: 5px; }
.group:last-child { border-right: 0; }
.icons { display: flex; gap: 5px; height: 27px; align-items: center; }
.icons button, .icons svg { width: 24px; height: 24px; }
.icons .picked { width: 26px; height: 26px; background: #1691c2; }
.label { padding: 0 4px; height: 11px; }

/* Viewport */
.viewport { position: relative; flex: 1; min-height: 0; background: #fff; }
.scene { position: absolute; inset: 0; width: 100%; height: 100%; }

.pivot {
  position: absolute;
  left: 50%;
  top: 50%;
  width: 30px;
  margin: -17px 0 0 -15px;
  display: flex;
  flex-direction: column;
  align-items: center;
  color: #a5f5ae;
  font-weight: bold;
  font-size: 7px;
}

.notice {
  position: absolute;
  top: 4px;
  left: 50%;
  transform: translateX(-50%);
  display: flex;
  height: 16px;
  align-items: stretch;
  background: #f2f2f2;
  line-height: 16px;
  white-space: nowrap;
}
.notice-text { display: flex; align-items: center; padding: 0 11px 0 2px; border-right: 1px solid #ddd; }
.notice b { margin: 0 14px 0 4px; }
.notice a { padding: 0 8px; color: #1874a0; text-decoration: none; }

.browser { position: absolute; left: 2px; top: 4px; width: 201px; }
.panel-head {
  display: flex;
  align-items: center;
  gap: 5px;
  height: 16px;
  padding: 0 6px 0 3px;
  background: #f0f0f0;
  border: 1px solid #dadada;
  font: 7px/14px Roboto, sans-serif;
}
.panel-head h2 { flex: 1; }
.comments { position: absolute; left: 2px; bottom: 3px; width: 201px; padding-left: 16px; }

.tree { padding: 3px 0 0 21px; }
.tree li { display: flex; align-items: center; height: 16px; gap: 3px; }
.tree .root { margin-left: -12px; gap: 5px; }
.tree .leaf { padding-left: 28px; }
.ic { width: 11px; height: 11px; }
.dim { opacity: .45; }
.node {
  display: flex;
  align-items: center;
  gap: 6px;
  height: 14px;
  padding: 0 7px 0 1px;
  background: #f2f2f2;
  white-space: nowrap;
}
.tree li:not(.leaf) .node { margin-left: 1px; }
.node.two { gap: 5px; }
.node.two .ic + .ic { margin-right: 5px; }
.root-name {
  display: flex;
  align-items: center;
  gap: 8px;
  height: 12px;
  padding: 0 8px 0 2px;
  background: #8f8f8f;
  color: #fff;
}
.tree input {
  appearance: none;
  width: 9px;
  height: 9px;
  margin: 0;
  border: 1px solid #444;
  border-radius: 50%;
  background: radial-gradient(circle, #222 0 1px, #fff 2px);
}
.twist { width: 12px; height: 12px; }
.twist::before {
  content: "";
  width: 7px;
  height: 9px;
  background: #555;
  clip-path: polygon(0 0, 100% 50%, 0 100%, 0 0, 15% 20%, 15% 80%, 80% 50%, 15% 20%);
}
.twist.open::before { height: 8px; clip-path: polygon(100% 0, 100% 100%, 0 100%); }

.viewcube { position: absolute; right: 10px; top: 14px; width: 66px; height: 66px; }
.cube-face { font: bold 7px Roboto, sans-serif; fill: #555; }
.cube-face.side { font-size: 6px; }
.axis { font: 9px "Liberation Sans", sans-serif; }
.axis.x { fill: #d02a3b; }
.axis.y { fill: #45e05f; }
.axis.z { fill: #2a1cc4; }

.navbar {
  position: absolute;
  left: 50%;
  bottom: 5px;
  transform: translateX(-50%);
  display: flex;
  gap: 5px;
  height: 15px;
  padding: 0 2px;
  background: #f2f2f2;
}
.navbar .caret { margin-left: 1px; }

/* Timeline */
.timeline {
  display: flex;
  align-items: center;
  height: 33px;
  padding: 0 9px 0 6px;
  background: #f0f0f0;
  border-top: 1px solid #e0e0e0;
}
.playback { display: flex; gap: 7px; }
.history { display: flex; margin-left: 10px; padding-top: 6px; }
.history li {
  width: 16px;
  height: 18px;
  padding-left: 2px;
  background: linear-gradient(#aaa, #aaa) 8px 14px / 1px 3px no-repeat;
  border-bottom: 1px solid #bbb;
}
.history svg { width: 12px; height: 12px; }
.marker { width: 8px; height: 22px; margin-left: -4px; }
.prefs { margin-left: auto; }

/* Taskbar */
.taskbar {
  display: grid;
  grid-template-columns: 1fr auto 1fr;
  align-items: center;
  height: 32px;
  background: #30231f;
  color: #f2f2f2;
  font: 8px/11px Roboto, sans-serif;
}
.weather { justify-self: start; gap: 3px; padding-left: 12px; text-align: left; }
.weather svg { width: 18px; height: 18px; }
.weather b { font-weight: 500; }
.badge-num { font: bold 8px "Open Sans", sans-serif; fill: #fff; }
.apps { display: flex; align-items: center; }
.apps > button { position: relative; width: 29px; height: 30px; }
.apps > button svg { width: 17px; height: 17px; }
.apps .active { background: #453936; border-radius: 3px; }
.apps .running::after {
  content: "";
  position: absolute;
  bottom: 1px;
  width: 4px;
  height: 2px;
  border-radius: 1px;
  background: #aaa;
}
.apps .active::after { width: 10px; background: #6fc0ee; }
.search {
  display: flex;
  align-items: center;
  gap: 5px;
  width: 144px;
  height: 20px;
  margin: 0 3px 0 2px;
  padding: 0 4px 0 6px;
  border-radius: 10px;
  background: #f1f1f1;
}
.search input {
  flex: 1;
  min-width: 0;
  padding: 0;
  border: 0;
  background: none;
  font: 9px/18px "Open Sans", "Noto Sans", sans-serif;
}
.search input::placeholder { color: #666; }
.space { width: 30px; height: 18px; }
.dell { font: bold 5px "Liberation Sans", sans-serif; fill: #eee; }
.m365 { font: bold 5px "Open Sans", sans-serif; fill: #eee; }
.fus { font: bold 3px "Open Sans", sans-serif; fill: #fff; }
.tray { justify-self: end; display: flex; align-items: center; gap: 10px; padding-right: 12px; }
.status { display: flex; gap: 4px; }
.clock { display: flex; align-items: center; gap: 5px; }
.clock time { text-align: right; }

.pointer-halo {
  position: absolute;
  right: 95px;
  top: 67px;
  width: 38px;
  height: 38px;
  border-radius: 50%;
  background: radial-gradient(closest-side, rgba(240, 246, 90, .95) 0 65%, rgba(240, 246, 90, 0));
  pointer-events: none;
}
```
